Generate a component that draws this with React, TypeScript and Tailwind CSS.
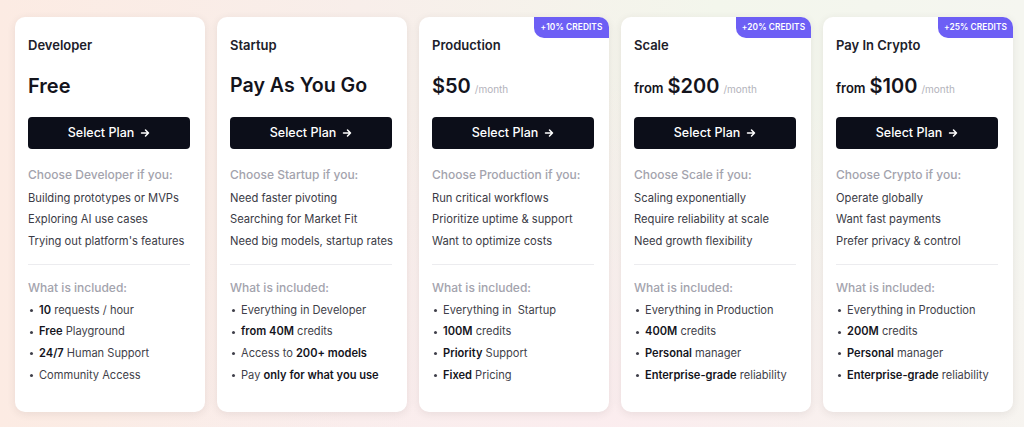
import type { ReactNode } from 'react'

type Plan = {
  name: string
  price: ReactNode
  badge?: string
  chooseLabel: string
  reasons: string[]
  included: ReactNode[]
}

const B = ({ children }: { children: ReactNode }) => (
  <span className="font-semibold text-[#14141c]">{children}</span>
)

const Month = () => <span className="ml-1 text-[10px] font-normal text-[#b3b3bb]">/month</span>

const plans: Plan[] = [
  {
    name: 'Developer',
    price: <span className="text-[20px] font-semibold">Free</span>,
    chooseLabel: 'Choose Developer if you:',
    reasons: ['Building prototypes or MVPs', 'Exploring AI use cases', "Trying out platform's features"],
    included: [
      <><B>10</B> requests / hour</>,
      <><B>Free</B> Playground</>,
      <><B>24/7</B> Human Support</>,
      <>Community Access</>,
    ],
  },
  {
    name: 'Startup',
    price: <span className="text-[19.6px] font-semibold">Pay As You Go</span>,
    chooseLabel: 'Choose Startup if you:',
    reasons: ['Need faster pivoting', 'Searching for Market Fit', 'Need big models, startup rates'],
    included: [
      <>Everything in Developer</>,
      <><B>from 40M</B> credits</>,
      <>Access to <B>200+ models</B></>,
      <>Pay <B>only for what you use</B></>,
    ],
  },
  {
    name: 'Production',
    badge: '+10% CREDITS',
    price: <><span className="text-[20px] font-semibold">$50</span><Month /></>,
    chooseLabel: 'Choose Production if you:',
    reasons: ['Run critical workflows', 'Prioritize uptime & support', 'Want to optimize costs'],
    included: [
      <>Everything in&nbsp; Startup</>,
      <><B>100M</B> credits</>,
      <><B>Priority</B> Support</>,
      <><B>Fixed</B> Pricing</>,
    ],
  },
  {
    name: 'Scale',
    badge: '+20% CREDITS',
    price: <><span className="mr-1 text-[13px] font-semibold">from</span><span className="text-[20px] font-semibold">$200</span><Month /></>,
    chooseLabel: 'Choose Scale if you:',
    reasons: ['Scaling exponentially', 'Require reliability at scale', 'Need growth flexibility'],
    included: [
      <>Everything in Production</>,
      <><B>400M</B> credits</>,
      <><B>Personal</B> manager</>,
      <><B>Enterprise-grade</B> reliability</>,
    ],
  },
  {
    name: 'Pay In Crypto',
    badge: '+25% CREDITS',
    price: <><span className="mr-1 text-[13px] font-semibold">from</span><span className="text-[20px] font-semibold">$100</span><Month /></>,
    chooseLabel: 'Choose Crypto if you:',
    reasons: ['Operate globally', 'Want fast payments', 'Prefer privacy & control'],
    included: [
      <>Everything in Production</>,
      <><B>200M</B> credits</>,
      <><B>Personal</B> manager</>,
      <><B>Enterprise-grade</B> reliability</>,
    ],
  },
]

function PlanCard({ plan }: { plan: Plan }) {
  return (
    <div className="relative h-[395px] w-[190px] shrink-0 overflow-hidden rounded-[10px] bg-white px-[13px] pt-5 shadow-[0_2px_8px_rgba(60,40,40,0.09)]">
      {plan.badge && (
        <div className="absolute top-0 right-0 flex h-[21px] w-[75px] items-center justify-center rounded-bl-[10px] bg-[#6d5ff5] text-[8.3px] font-semibold tracking-[0.1px] text-white">
          {plan.badge}
        </div>
      )}
      <div className="text-[13px] leading-4 font-semibold text-[#202029]">{plan.name}</div>
      <div className="mt-[18px] flex h-7 items-baseline whitespace-nowrap text-[#14141c]">{plan.price}</div>
      <button className="mt-[18px] flex h-8 w-[162px] items-center justify-center gap-1.5 rounded-[4px] bg-[#0c0e19] text-[12.5px] font-medium text-white">
        Select Plan
        <svg width="10" height="10" viewBox="0 0 10 10" fill="none" stroke="currentColor" strokeWidth="1.5" strokeLinecap="round" strokeLinejoin="round">
          <path d="M1.5 5h7M5.5 2l3 3-3 3" />
        </svg>
      </button>
      <div className="mt-[18px] text-[12px] leading-4 font-medium whitespace-nowrap text-[#a3a3ad]">{plan.chooseLabel}</div>
      <div className="mt-[4.5px]">
        {plan.reasons.map((r) => (
          <div key={r} className="text-[11.2px] leading-[21.5px] whitespace-nowrap text-[#3b3b46]">{r}</div>
        ))}
      </div>
      <div className="mt-[11.5px] h-px w-[162px] bg-[#ececef]" />
      <div className="mt-[15px] text-[12px] leading-4 font-medium text-[#a3a3ad]">What is included:</div>
      <div className="mt-[4px]">
        {plan.included.map((it, i) => (
          <div key={i} className="flex items-center text-[11.1px] leading-[21.7px] whitespace-nowrap text-[#3f3f4a]">
            <span className="mr-[6px] ml-[2px] h-[3px] w-[3px] rounded-full bg-[#3f3f4a]" />
            <span>{it}</span>
          </div>
        ))}
      </div>
    </div>
  )
}

export default function App() {
  return (
    <div
      className="h-[427px] w-[1024px] overflow-hidden bg-[radial-gradient(ellipse_at_60%_110%,#fcecef_0%,rgba(252,236,239,0)_60%),linear-gradient(90deg,#fcebe3_0%,#f8eeea_35%,#f3f6ec_70%,#f5f6f0_100%)] pt-[17px] pl-[15px] font-['Inter',sans-serif]"
    >
      <div className="flex gap-3">
        {plans.map((p) => (
          <PlanCard key={p.name} plan={p} />
        ))}
      </div>
    </div>
  )
}
